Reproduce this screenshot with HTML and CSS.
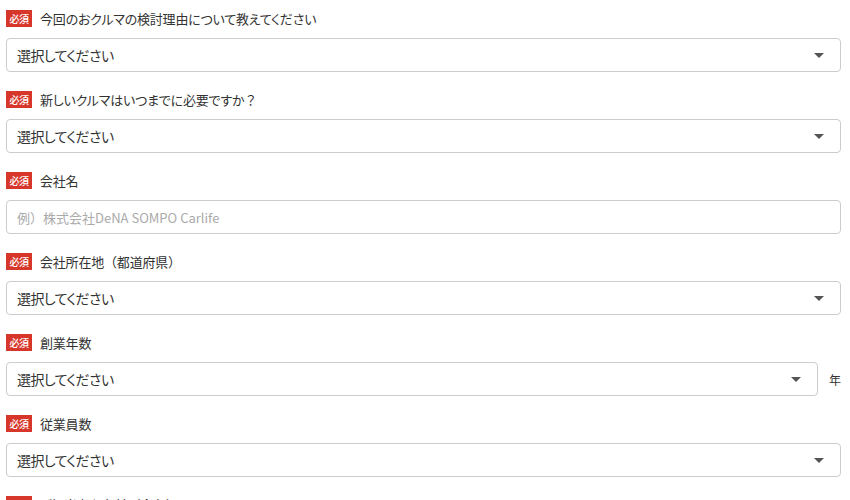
FILE: index.html
```html
<!DOCTYPE html>
<html lang="ja">
<head>
<meta charset="utf-8">
<link rel="stylesheet" href="styles.css">
</head>
<body>
<form class="form">
  <div class="field">
    <div class="label"><span class="badge">必須</span><span class="label-text">今回のおクルマの検討理由について教えてください</span></div>
    <div class="control"><div class="select"><span class="value">選択してください</span><i class="arrow"></i></div></div>
  </div>
  <div class="field">
    <div class="label"><span class="badge">必須</span><span class="label-text">新しいクルマはいつまでに必要ですか<span class="fw">？</span></span></div>
    <div class="control"><div class="select"><span class="value">選択してください</span><i class="arrow"></i></div></div>
  </div>
  <div class="field">
    <div class="label"><span class="badge">必須</span><span class="label-text">会社名</span></div>
    <div class="control"><div class="input placeholder">例<span class="fw">）</span>株式会社DeNA SOMPO Carlife</div></div>
  </div>
  <div class="field">
    <div class="label"><span class="badge">必須</span><span class="label-text">会社所在地<span class="fw">（</span>都道府県<span class="fw">）</span></span></div>
    <div class="control"><div class="select"><span class="value">選択してください</span><i class="arrow"></i></div></div>
  </div>
  <div class="field">
    <div class="label"><span class="badge">必須</span><span class="label-text">創業年数</span></div>
    <div class="control"><div class="select"><span class="value">選択してください</span><i class="arrow"></i></div><span class="unit">年</span></div>
  </div>
  <div class="field">
    <div class="label"><span class="badge">必須</span><span class="label-text">従業員数</span></div>
    <div class="control"><div class="select"><span class="value">選択してください</span><i class="arrow"></i></div></div>
  </div>
  <div class="field">
    <div class="label"><span class="badge">必須</span><span class="label-text">ご担当者お名前<span class="fw">（</span>全角<span class="fw">）</span></span></div>
  </div>
</form>
</body>
</html>
```

FILE: styles.css
```css
html, body {
  margin: 0;
  padding: 0;
  background: #fff;
}
body {
  font-family: "Noto Sans CJK JP", "Noto Sans", sans-serif;
  font-feature-settings: "palt";
  color: #333;
  overflow: hidden;
  height: 500px;
}
.fw {
  font-feature-settings: normal;
}
.form {
  padding: 10px 9px 0 6px;
}
.field {
  margin-bottom: 19px;
}
.label {
  display: flex;
  align-items: center;
  height: 17px;
  margin-bottom: 11px;
}
.badge {
  display: flex;
  align-items: center;
  justify-content: center;
  width: 26px;
  height: 17px;
  background: #d7372b;
  color: #fff;
  font-size: 10px;
  font-weight: 500;
  line-height: 1;
  letter-spacing: -0.5px;
  flex-shrink: 0;
}
.label-text {
  margin-left: 8px;
  font-size: 13px;
  line-height: 17px;
  letter-spacing: -0.2px;
  color: #333;
}
.control {
  display: flex;
  align-items: center;
}
.select, .input {
  flex: 1;
  box-sizing: border-box;
  height: 34px;
  border: 1px solid #ccc;
  border-radius: 4px;
  display: flex;
  align-items: center;
  padding: 0 0 0 10px;
  font-size: 14px;
  color: #333;
}
.value {
  flex: 1;
  letter-spacing: -0.6px;
}
.arrow {
  width: 0;
  height: 0;
  border-left: 5px solid transparent;
  border-right: 5px solid transparent;
  border-top: 5px solid #555;
  margin-right: 16px;
}
.placeholder {
  color: #aaa;
  font-size: 13px;
  white-space: pre;
}
.unit {
  margin-left: 11px;
  width: 12px;
  font-size: 12px;
  color: #333;
}
```
